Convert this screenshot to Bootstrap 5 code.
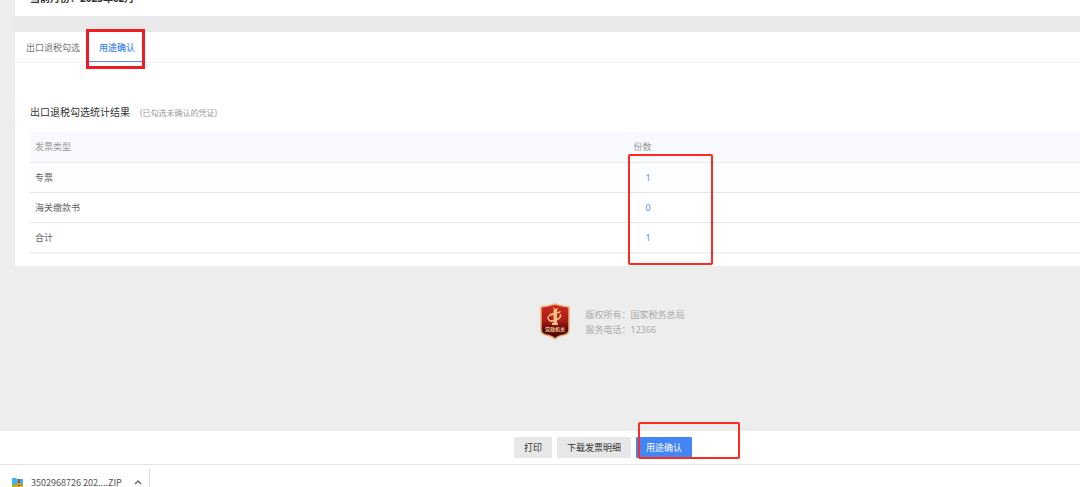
<!DOCTYPE html>
<html lang="zh-CN">
<head>
<meta charset="utf-8">
<meta name="viewport" content="width=device-width, initial-scale=1">
<title>用途确认</title>
<link href="https://cdn.jsdelivr.net/npm/bootstrap@5.3.0/dist/css/bootstrap.min.css" rel="stylesheet">
<style>
body{font-family:"Noto Sans","Noto Sans CJK SC",sans-serif;font-size:9px;line-height:15px;background:#ededed;color:#666}
.app{min-height:100vh}
.sheet{margin-left:15px}
.month-panel{height:16px;padding:0 15px 10px;color:#333;font-size:10px;font-weight:700}
.month-panel p{line-height:16px}
.band{height:16px;background:#e9e9e9}
.tabs{height:31px;padding-left:11px;gap:19px;border-bottom:1px solid #f2f2f2}
.tabs .nav-link{padding:0;color:#777;line-height:32px;height:30px;font-size:9px}
.tabs .nav-item{height:30px}
.tabs .nav-link.active{color:#4285f4;font-weight:500}
.tabs .nav-link.active::after{content:"";position:absolute;left:-10px;right:-8px;bottom:0;height:1px;background:#5b93f5}
.note-box{position:absolute;pointer-events:none;border:2px solid #ff2a1f;border-radius:2px;z-index:2}
.note-tab{border:3px solid #ee1c25;border-radius:0;left:-13px;right:-10px;top:-3px;height:40px}
.note-count{left:-1px;top:22px;width:85px;height:111px}
.note-confirm{left:2px;top:-15px;width:102px;height:37px}
.results{padding:41px 0 12px 15px}
.results h1{font-size:10px;font-weight:400;line-height:16px;color:#333}
.results h1 + span{font-size:8px;color:#999}
.results .heading{gap:10px}
.counts{table-layout:fixed;margin-top:12px;font-size:9px;--bs-table-bg:transparent}
.counts th,.counts td{height:30px;padding:0 5px;line-height:15px;vertical-align:middle;border-bottom:1px solid #e6e8ea}
.counts tr{height:30px}
.counts thead th{font-weight:400;color:#999;background:#f8faff}
.counts tbody th{font-weight:400;color:#666}
.counts tbody tr:first-child > *{background:#fcfdff}
.counts tbody tr:last-child > *{height:31px;border-bottom:2px solid #f1f1f1}
.counts .type-col{width:57%}
.counts a{margin-left:12px;color:#5b8ff0;text-decoration:none}
.owner{padding-top:37px;color:#aaa}
.owner .info{padding:4px 0}
.owner .wrap{gap:15px;margin-left:145px}
.actions{height:34px;gap:5px;padding-left:126px;border-bottom:1px solid #e4e4e4}
.actions .btn{height:21px;padding:0 10px;border:0;border-radius:1px;font-size:9px;line-height:20px;background:#e7e7e7;color:#333}
.actions .btn.confirm{background:#4285f4;color:#fff}
.downloads{height:22px;overflow:hidden;padding-left:12px}
.download-item{height:34px;width:138px;gap:8px;margin-top:4px;border-right:1px solid #ddd;color:#555}
.download-item .file-name{padding-top:6px;font-family:"Noto Sans CJK SC",sans-serif}
.download-item button{margin-left:4px;line-height:0}
</style>
<script src="https://cdn.jsdelivr.net/npm/bootstrap@5.3.0/dist/js/bootstrap.bundle.min.js"></script>
</head>
<body>
<div class="app d-flex flex-column">
  <main class="flex-grow-1">
    <div class="sheet">
      <header class="month-panel bg-white overflow-hidden d-flex flex-column justify-content-end"><p class="m-0">当前月份：2023年02月</p></header>
      <div class="band"></div>
      <section class="bg-white">
        <ul class="nav tabs">
          <li class="nav-item"><a class="nav-link" href="#select">出口退税勾选</a></li>
          <li class="nav-item position-relative"><a class="nav-link active" href="#confirm" aria-current="page">用途确认</a><span class="note-box note-tab"></span></li>
        </ul>
        <div class="results" id="confirm">
          <div class="heading d-flex align-items-center"><h1 class="m-0">出口退税勾选统计结果</h1><span>(已勾选未确认的凭证)</span></div>
          <table class="table counts mb-0">
            <thead><tr><th class="type-col" scope="col">发票类型</th><th class="position-relative" scope="col">份数<span class="note-box note-count"></span></th></tr></thead>
            <tbody>
              <tr><th scope="row">专票</th><td><a href="#invoice">1</a></td></tr>
              <tr><th scope="row">海关缴款书</th><td><a href="#customs">0</a></td></tr>
              <tr><th scope="row">合计</th><td><a href="#total">1</a></td></tr>
            </tbody>
          </table>
        </div>
      </section>
    </div>
    <footer class="owner d-flex justify-content-center">
      <div class="wrap d-flex">
        <svg width="30" height="37" viewBox="0 0 30 37" role="img" aria-label="党政机关">
          <defs><linearGradient id="red" x2="0" y2="1"><stop stop-color="#cf291c"/><stop offset=".5" stop-color="#a91c16"/><stop offset=".68" stop-color="#650c0b"/><stop offset="1" stop-color="#4e0807"/></linearGradient></defs>
          <path d="M1 4Q9 3 15 1Q21 3 29 4V27Q29 31 24 32Q18 33 15 36Q12 33 6 32Q1 31 1 27Z" fill="url(#red)" stroke="#e6b57c" stroke-width="1.5"/>
          <path d="M14 7L13 4L15.500 6L18 5L17 8L17 20H18V22H12V20H13.500V8Z" fill="#f0c183"/>
          <path d="M9 11L21 8L20 10L10 12Z" fill="#f0c183"/>
          <path d="M14 12Q7 13 9 16Q12 19 18 15Q21 13 19 12L21 11Q23 14 18 17Q11 21 8 17Q5 12 14 11Z" fill="#f0c183"/>
          <text x="15" y="28" text-anchor="middle" font-size="5" font-weight="700" fill="#efc394">党政机关</text>
        </svg>
        <div class="info"><div>版权所有：国家税务总局</div><div>服务电话：12366</div></div>
      </div>
    </footer>
  </main>
  <div class="actions bg-white d-flex justify-content-center align-items-center">
    <button type="button" class="btn">打印</button>
    <button type="button" class="btn">下载发票明细</button>
    <div class="position-relative d-flex"><button type="button" class="btn confirm">用途确认</button><span class="note-box note-confirm"></span></div>
  </div>
  <div class="downloads bg-white">
    <div class="download-item d-flex">
      <svg class="mt-2" width="11" height="11" viewBox="0 0 11 11" aria-hidden="true"><path d="M0 1H4L5 2H11V10H0Z" fill="#41b5ee"/><path d="M0 7H11V10H0Z" fill="#8abd35"/><path d="M0 9H11V10H0Z" fill="#f4a720"/><path d="M6 2H8V9H6Z" fill="#9b5331"/><path d="M5 6H9V8H5Z" fill="#d9982c"/></svg>
      <span class="file-name text-nowrap">3502968726 202....ZIP</span>
      <button type="button" class="btn p-0 border-0 align-self-start mt-2" aria-label="更多选项"><svg width="8" height="10" viewBox="0 0 8 10"><path d="M1 7L4 4L7 7" fill="none" stroke="#666" stroke-width="1.3"/></svg></button>
    </div>
  </div>
</div>
</body>
</html>
